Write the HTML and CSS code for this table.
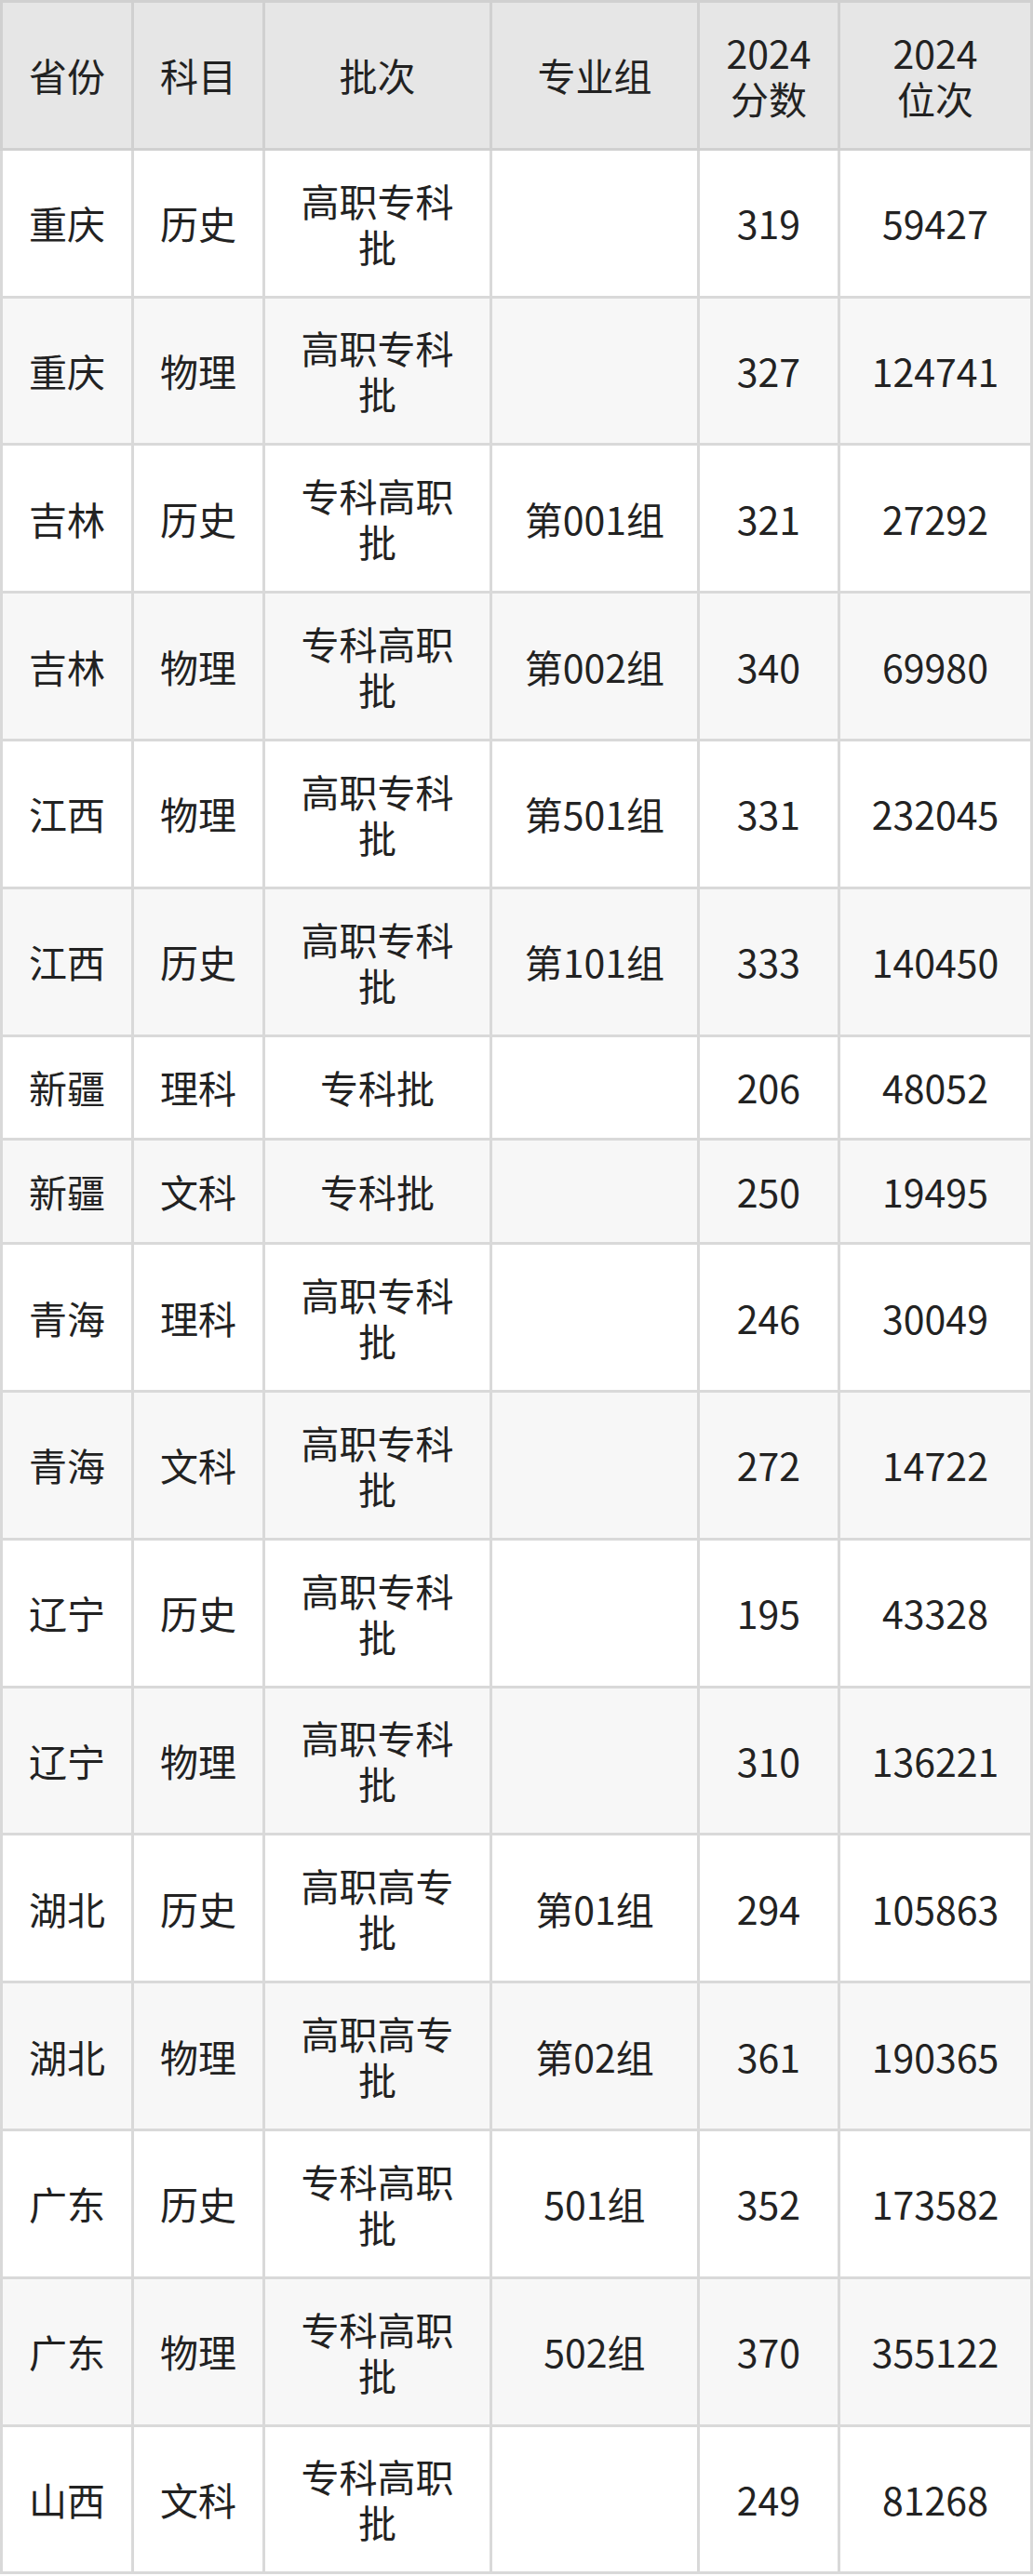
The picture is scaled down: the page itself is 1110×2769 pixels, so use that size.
FILE: index.html
```html
<!DOCTYPE html>
<html lang="zh-CN">
<head>
<meta charset="utf-8">
<title>2024 分数 位次</title>
<link rel="stylesheet" href="styles.css">
</head>
<body>
<table class="score-table">
  <colgroup>
    <col class="c-prov">
    <col class="c-subj">
    <col class="c-batch">
    <col class="c-group">
    <col class="c-score">
    <col class="c-rank">
  </colgroup>
  <thead>
    <tr>
      <th>省份</th>
      <th>科目</th>
      <th>批次</th>
      <th>专业组</th>
      <th><span class="ln">2024</span><span class="ln">分数</span></th>
      <th><span class="ln">2024</span><span class="ln">位次</span></th>
    </tr>
  </thead>
  <tbody>
    <tr class="tall"><td>重庆</td><td>历史</td><td>高职专科批</td><td></td><td>319</td><td>59427</td></tr>
    <tr class="tall"><td>重庆</td><td>物理</td><td>高职专科批</td><td></td><td>327</td><td>124741</td></tr>
    <tr class="tall"><td>吉林</td><td>历史</td><td>专科高职批</td><td>第001组</td><td>321</td><td>27292</td></tr>
    <tr class="tall"><td>吉林</td><td>物理</td><td>专科高职批</td><td>第002组</td><td>340</td><td>69980</td></tr>
    <tr class="tall"><td>江西</td><td>物理</td><td>高职专科批</td><td>第501组</td><td>331</td><td>232045</td></tr>
    <tr class="tall"><td>江西</td><td>历史</td><td>高职专科批</td><td>第101组</td><td>333</td><td>140450</td></tr>
    <tr class="short"><td>新疆</td><td>理科</td><td>专科批</td><td></td><td>206</td><td>48052</td></tr>
    <tr class="short"><td>新疆</td><td>文科</td><td>专科批</td><td></td><td>250</td><td>19495</td></tr>
    <tr class="tall"><td>青海</td><td>理科</td><td>高职专科批</td><td></td><td>246</td><td>30049</td></tr>
    <tr class="tall"><td>青海</td><td>文科</td><td>高职专科批</td><td></td><td>272</td><td>14722</td></tr>
    <tr class="tall"><td>辽宁</td><td>历史</td><td>高职专科批</td><td></td><td>195</td><td>43328</td></tr>
    <tr class="tall"><td>辽宁</td><td>物理</td><td>高职专科批</td><td></td><td>310</td><td>136221</td></tr>
    <tr class="tall"><td>湖北</td><td>历史</td><td>高职高专批</td><td>第01组</td><td>294</td><td>105863</td></tr>
    <tr class="tall"><td>湖北</td><td>物理</td><td>高职高专批</td><td>第02组</td><td>361</td><td>190365</td></tr>
    <tr class="tall"><td>广东</td><td>历史</td><td>专科高职批</td><td>501组</td><td>352</td><td>173582</td></tr>
    <tr class="tall"><td>广东</td><td>物理</td><td>专科高职批</td><td>502组</td><td>370</td><td>355122</td></tr>
    <tr class="tall"><td>山西</td><td>文科</td><td>专科高职批</td><td></td><td>249</td><td>81268</td></tr>
  </tbody>
</table>
</body>
</html>
```

FILE: styles.css
```css
html, body {
  margin: 0;
  padding: 0;
  background: #ffffff;
}

.score-table {
  width: 1110px;
  table-layout: fixed;
  border-collapse: collapse;
  font-family: "Noto Sans CJK SC", "Noto Sans", sans-serif;
  font-size: 41px;
  line-height: 49px;
  color: #222222;
}

.c-prov  { width: 141px; }
.c-subj  { width: 141px; }
.c-batch { width: 244px; }
.c-group { width: 223px; }
.c-score { width: 151px; }
.c-rank  { width: 207px; }

.score-table th,
.score-table td {
  border: 3px solid #d9d9d9;
  padding: 0 22px;
  text-align: center;
  vertical-align: middle;
  font-weight: 400;
}

.score-table thead th {
  background: #e6e6e6;
  height: 155.8px;
  border-color: #d0d0d0;
}

.ln {
  display: block;
  height: 49px;
  overflow: visible;
}

.score-table tbody tr:nth-child(even) td {
  background: #f7f7f7;
}

.score-table tr.tall td {
  height: 155.8px;
}

.score-table tr.short td {
  height: 108.8px;
}
```
